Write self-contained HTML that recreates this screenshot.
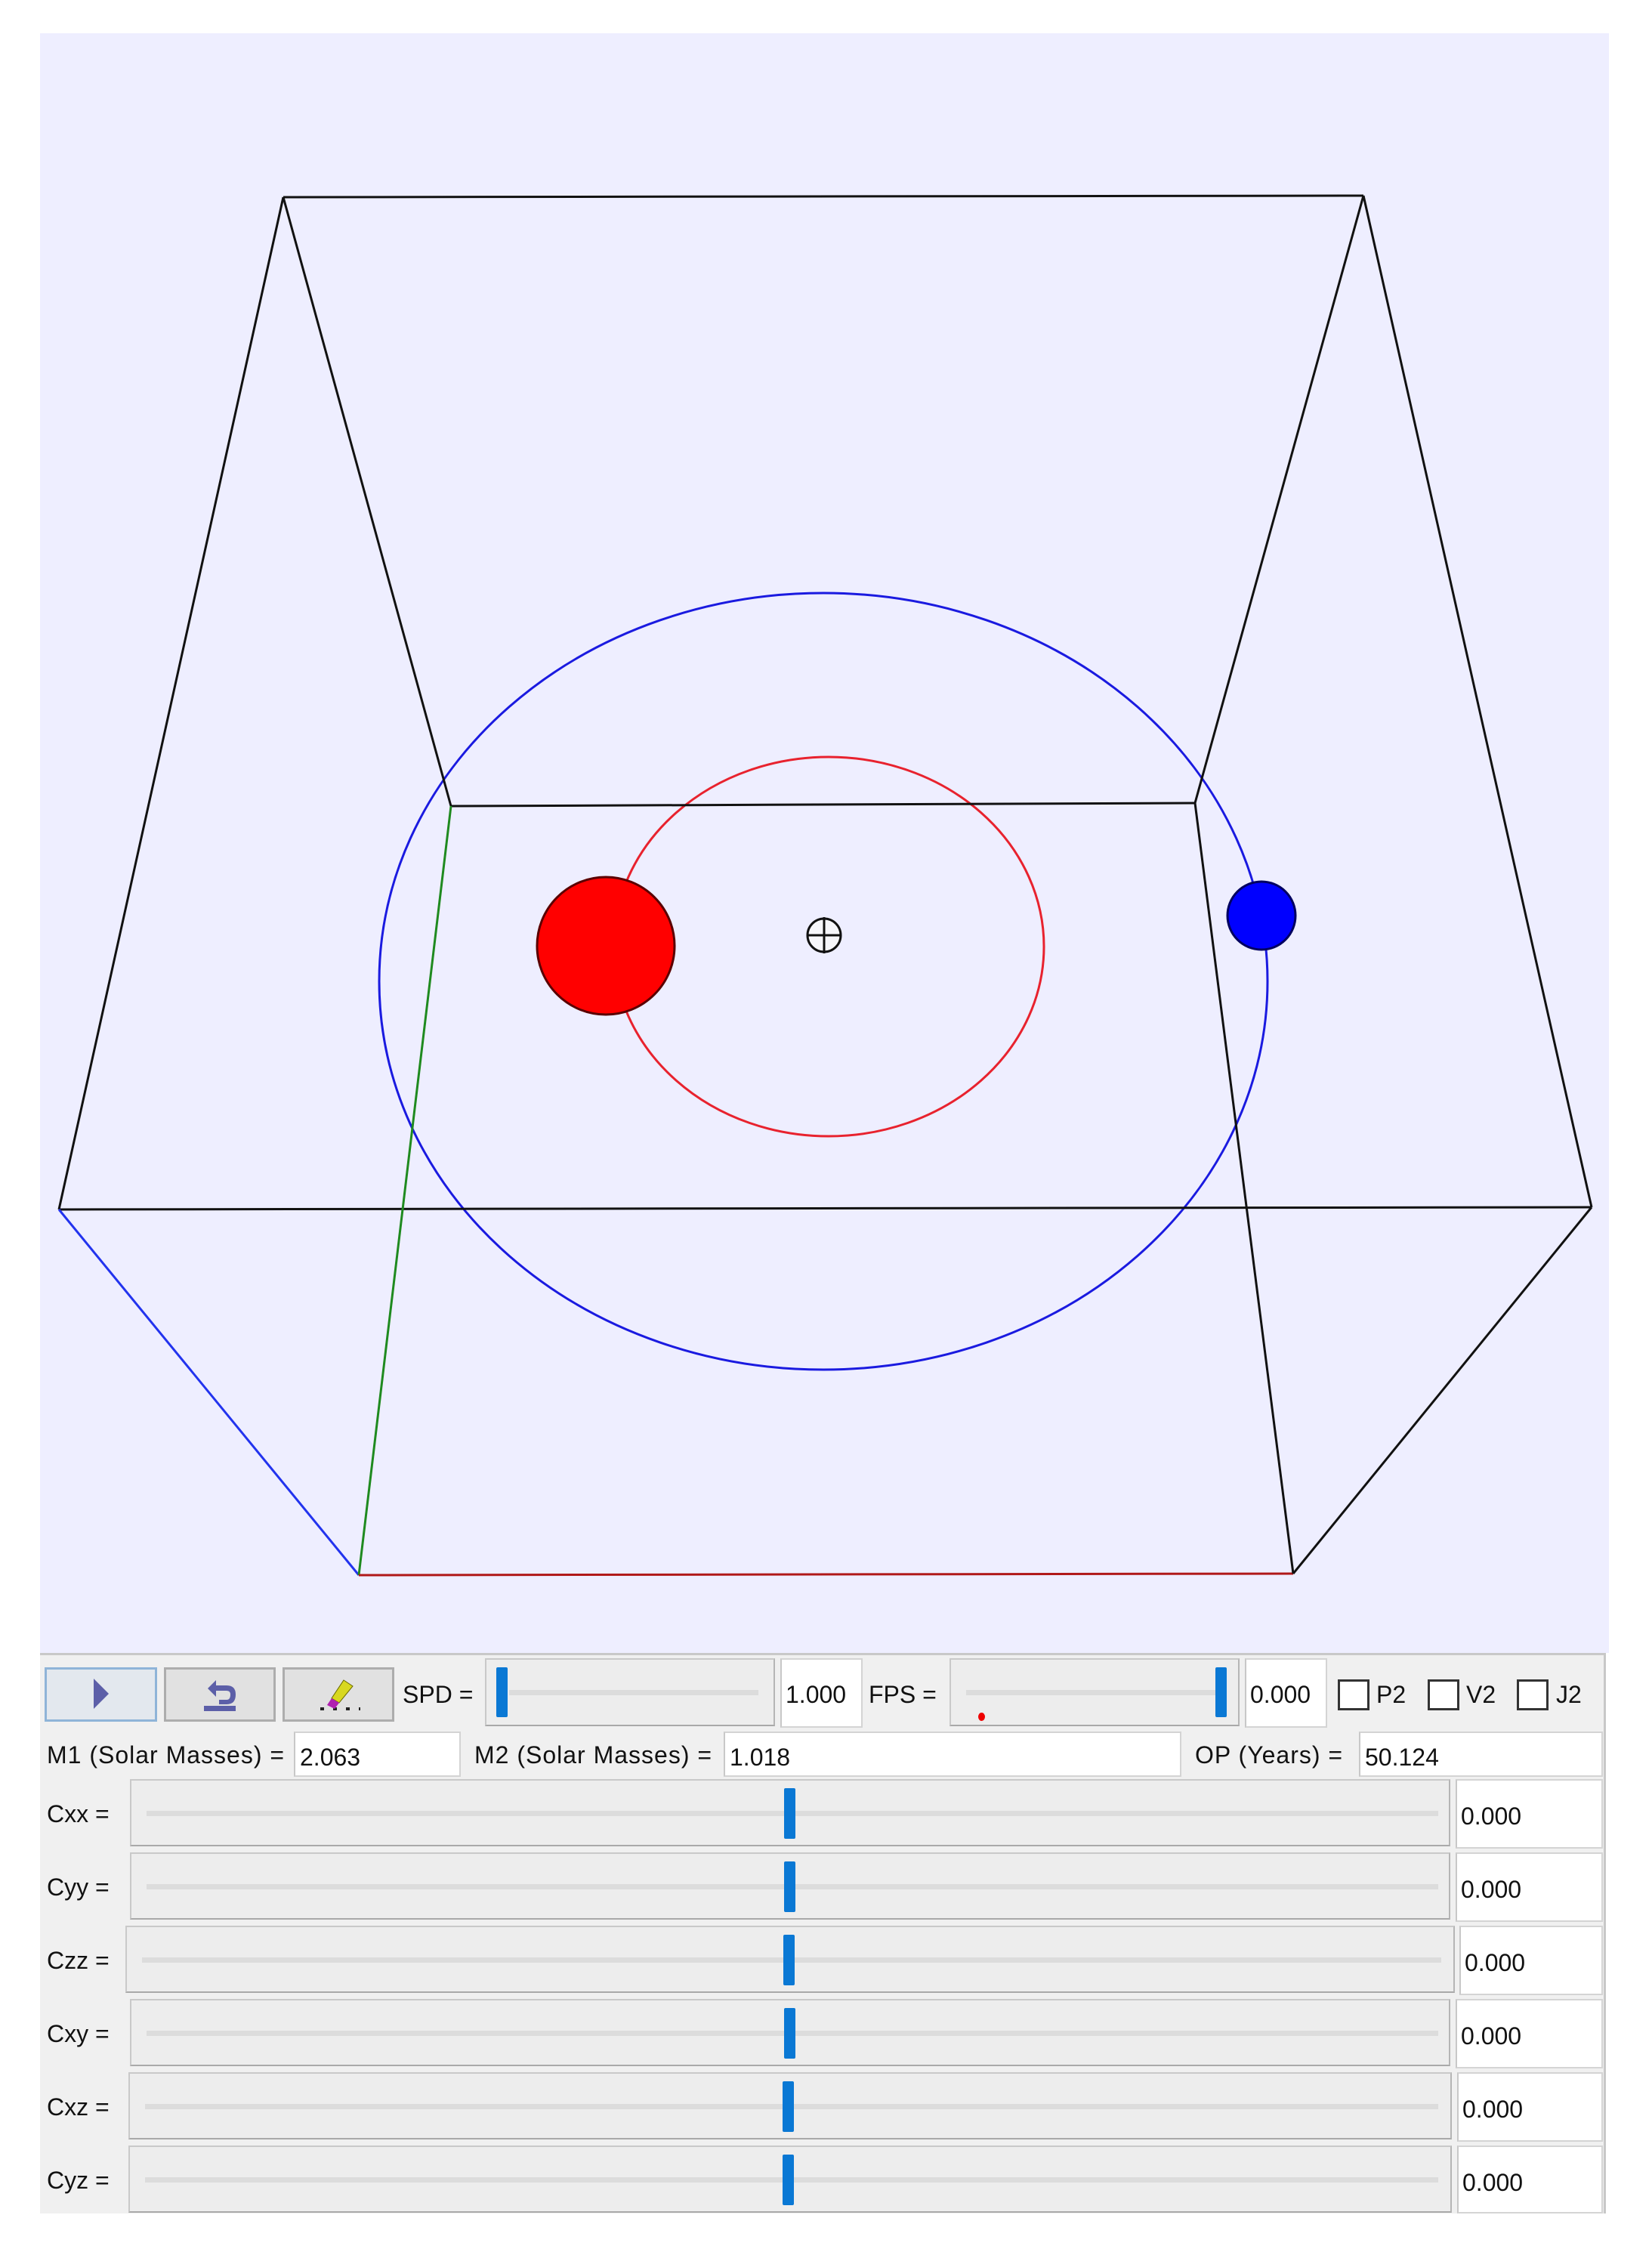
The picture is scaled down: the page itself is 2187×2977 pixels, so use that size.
<!DOCTYPE html>
<html><head><meta charset="utf-8"><style>
html,body{margin:0;padding:0;background:#fff;}
body{width:2187px;height:2977px;position:relative;overflow:hidden;font-family:Tahoma,"Liberation Sans","DejaVu Sans",sans-serif;font-size:32px;color:#111;}
.a{position:absolute;box-sizing:border-box;}
.lbl{position:absolute;line-height:1;white-space:nowrap;}
.fld{position:absolute;box-sizing:border-box;background:#fff;border:2px solid #d4d4d4;border-left-color:#c8c8c8;padding-left:6px;white-space:nowrap;}
.sl{position:absolute;box-sizing:border-box;background:#ededed;border:2px solid #c9c9c9;border-bottom-color:#a9a9a9;border-right-color:#b5b5b5;}
.tr{position:absolute;height:7px;background:#dcdcdc;}
.th{position:absolute;width:15px;background:#0a78d4;border-radius:2px;}
.btn{position:absolute;box-sizing:border-box;background:#e1e1e1;border:3px solid #adadad;}
.cb{position:absolute;box-sizing:border-box;width:42px;height:41px;border:3px solid #333;background:#fff;}
</style></head><body>
<svg class="a" style="left:0;top:0" width="2187" height="2977">
<rect x="53" y="44" width="2077" height="2144" fill="#eeeeff"/>
<g stroke-width="3" fill="none">
<ellipse cx="1090" cy="1299" rx="588" ry="514" stroke="#1a1ae0"/>
<ellipse cx="1097" cy="1253" rx="285" ry="251" stroke="#e8222e"/>
<line x1="375" y1="261" x2="1805" y2="259" stroke="#111"/>
<line x1="375" y1="261" x2="597" y2="1067" stroke="#111"/>
<line x1="1805" y1="259" x2="1582" y2="1063" stroke="#111"/>
<line x1="597" y1="1067" x2="1582" y2="1063" stroke="#111"/>
<line x1="375" y1="261" x2="78" y2="1601" stroke="#111"/>
<line x1="1805" y1="259" x2="2107" y2="1598" stroke="#111"/>
<line x1="78" y1="1601" x2="2107" y2="1598" stroke="#111"/>
<line x1="78" y1="1601" x2="475" y2="2085" stroke="#2233ee"/>
<line x1="597" y1="1067" x2="475" y2="2085" stroke="#1f8a1f"/>
<line x1="475" y1="2085" x2="1712" y2="2083" stroke="#b01818"/>
<line x1="1582" y1="1063" x2="1712" y2="2083" stroke="#111"/>
<line x1="2107" y1="1598" x2="1712" y2="2083" stroke="#111"/>
</g>
<circle cx="802" cy="1252" r="91" fill="#ff0000" stroke="#5a0000" stroke-width="3"/>
<circle cx="1670" cy="1212" r="45" fill="#0000ff" stroke="#000060" stroke-width="3"/>
<circle cx="1091" cy="1238" r="22" fill="#f6f6fa" stroke="#111" stroke-width="3"/>
<line x1="1069" y1="1238" x2="1113" y2="1238" stroke="#111" stroke-width="3"/>
<line x1="1091" y1="1214" x2="1091" y2="1262" stroke="#111" stroke-width="3"/>
</svg>

<div class="a" style="left:53px;top:2188px;width:2073px;height:742px;background:#f0f0f0;border-top:3px solid #c8c8c8;border-right:3px solid #c8c8c8;"></div>

<div class="btn" style="left:59px;top:2207px;width:149px;height:72px;border-color:#8fb4d8;background:#e3e8ee;">
<svg width="143" height="66"><polygon points="62,12 62,52 82,32" fill="#5c5fa8"/></svg></div>
<div class="btn" style="left:217px;top:2207px;width:148px;height:72px;">
<svg width="142" height="66"><path d="M55,25 L66,14 L66,21 L80,21 Q92,21 92,33 Q92,46 80,46 L70,46 L70,40 L80,40 Q85,40 85,33 Q85,28 80,28 L66,28 L66,36 Z" fill="#5c5fa8"/><rect x="50" y="48" width="42" height="7" fill="#5c5fa8"/></svg></div>
<div class="btn" style="left:374px;top:2207px;width:148px;height:72px;">
<svg width="142" height="66"><line x1="47" y1="52" x2="100" y2="52" stroke="#222" stroke-width="4" stroke-dasharray="5,12"/><polygon points="78,14 90,22 72,44 62,38" fill="#d8d820" stroke="#6a6a00" stroke-width="1"/><polygon points="62,38 72,44 66,52 56,47" fill="#b020b0"/></svg></div>

<div class="lbl" style="left:533px;top:2227px;">SPD =</div>
<div class="sl" style="left:642px;top:2195px;width:384px;height:90px;"><div class="tr" style="left:30px;top:40px;width:330px;"></div><div class="th" style="left:13px;top:10px;height:66px;"></div></div>
<div class="fld" style="left:1033px;top:2195px;width:109px;height:92px;padding-top:28px;padding-left:5px;">1.000</div>
<div class="lbl" style="left:1150px;top:2227px;">FPS =</div>
<div class="sl" style="left:1257px;top:2195px;width:384px;height:90px;"><div class="tr" style="left:20px;top:40px;width:340px;"></div><div class="th" style="left:350px;top:10px;height:66px;"></div><div class="a" style="left:36px;top:70px;width:9px;height:11px;border-radius:50%;background:#e00;"></div></div>
<div class="fld" style="left:1648px;top:2195px;width:109px;height:92px;padding-top:28px;padding-left:5px;">0.000</div>
<div class="cb" style="left:1771px;top:2223px;"></div><div class="lbl" style="left:1822px;top:2227px;">P2</div>
<div class="cb" style="left:1890px;top:2223px;"></div><div class="lbl" style="left:1941px;top:2227px;">V2</div>
<div class="cb" style="left:2008px;top:2223px;"></div><div class="lbl" style="left:2060px;top:2227px;">J2</div>

<div class="lbl" style="left:62px;top:2307px;letter-spacing:1px;">M1 (Solar Masses) =</div>
<div class="fld" style="left:389px;top:2292px;width:221px;height:60px;padding-top:14px;">2.063</div>
<div class="lbl" style="left:628px;top:2307px;letter-spacing:1px;">M2 (Solar Masses) =</div>
<div class="fld" style="left:958px;top:2292px;width:606px;height:60px;padding-top:14px;">1.018</div>
<div class="lbl" style="left:1582px;top:2307px;letter-spacing:1px;">OP (Years) =</div>
<div class="fld" style="left:1799px;top:2292px;width:323px;height:60px;padding-top:14px;">50.124</div>

<div class="lbl" style="left:62px;top:2385px;">Cxx =</div>
<div class="sl" style="left:172px;top:2355px;width:1748px;height:89px;"><div class="tr" style="left:20px;top:40px;width:1710px;"></div><div class="th" style="left:864px;top:10px;height:67px;"></div></div>
<div class="fld" style="left:1927px;top:2355px;width:195px;height:92px;padding-top:29px;padding-left:5px;">0.000</div>

<div class="lbl" style="left:62px;top:2482px;">Cyy =</div>
<div class="sl" style="left:172px;top:2452px;width:1748px;height:89px;"><div class="tr" style="left:20px;top:40px;width:1710px;"></div><div class="th" style="left:864px;top:10px;height:67px;"></div></div>
<div class="fld" style="left:1927px;top:2452px;width:195px;height:92px;padding-top:29px;padding-left:5px;">0.000</div>

<div class="lbl" style="left:62px;top:2579px;">Czz =</div>
<div class="sl" style="left:166px;top:2549px;width:1760px;height:89px;"><div class="tr" style="left:20px;top:40px;width:1720px;"></div><div class="th" style="left:869px;top:10px;height:67px;"></div></div>
<div class="fld" style="left:1932px;top:2549px;width:190px;height:92px;padding-top:29px;padding-left:5px;">0.000</div>

<div class="lbl" style="left:62px;top:2676px;">Cxy =</div>
<div class="sl" style="left:172px;top:2646px;width:1748px;height:89px;"><div class="tr" style="left:20px;top:40px;width:1710px;"></div><div class="th" style="left:864px;top:10px;height:67px;"></div></div>
<div class="fld" style="left:1927px;top:2646px;width:195px;height:92px;padding-top:29px;padding-left:5px;">0.000</div>

<div class="lbl" style="left:62px;top:2773px;">Cxz =</div>
<div class="sl" style="left:170px;top:2743px;width:1752px;height:89px;"><div class="tr" style="left:20px;top:40px;width:1712px;"></div><div class="th" style="left:864px;top:10px;height:67px;"></div></div>
<div class="fld" style="left:1929px;top:2743px;width:193px;height:92px;padding-top:29px;padding-left:5px;">0.000</div>

<div class="lbl" style="left:62px;top:2870px;">Cyz =</div>
<div class="sl" style="left:170px;top:2840px;width:1752px;height:89px;"><div class="tr" style="left:20px;top:40px;width:1712px;"></div><div class="th" style="left:864px;top:10px;height:67px;"></div></div>
<div class="fld" style="left:1929px;top:2840px;width:193px;height:90px;padding-top:29px;padding-left:5px;">0.000</div>
</body></html>
